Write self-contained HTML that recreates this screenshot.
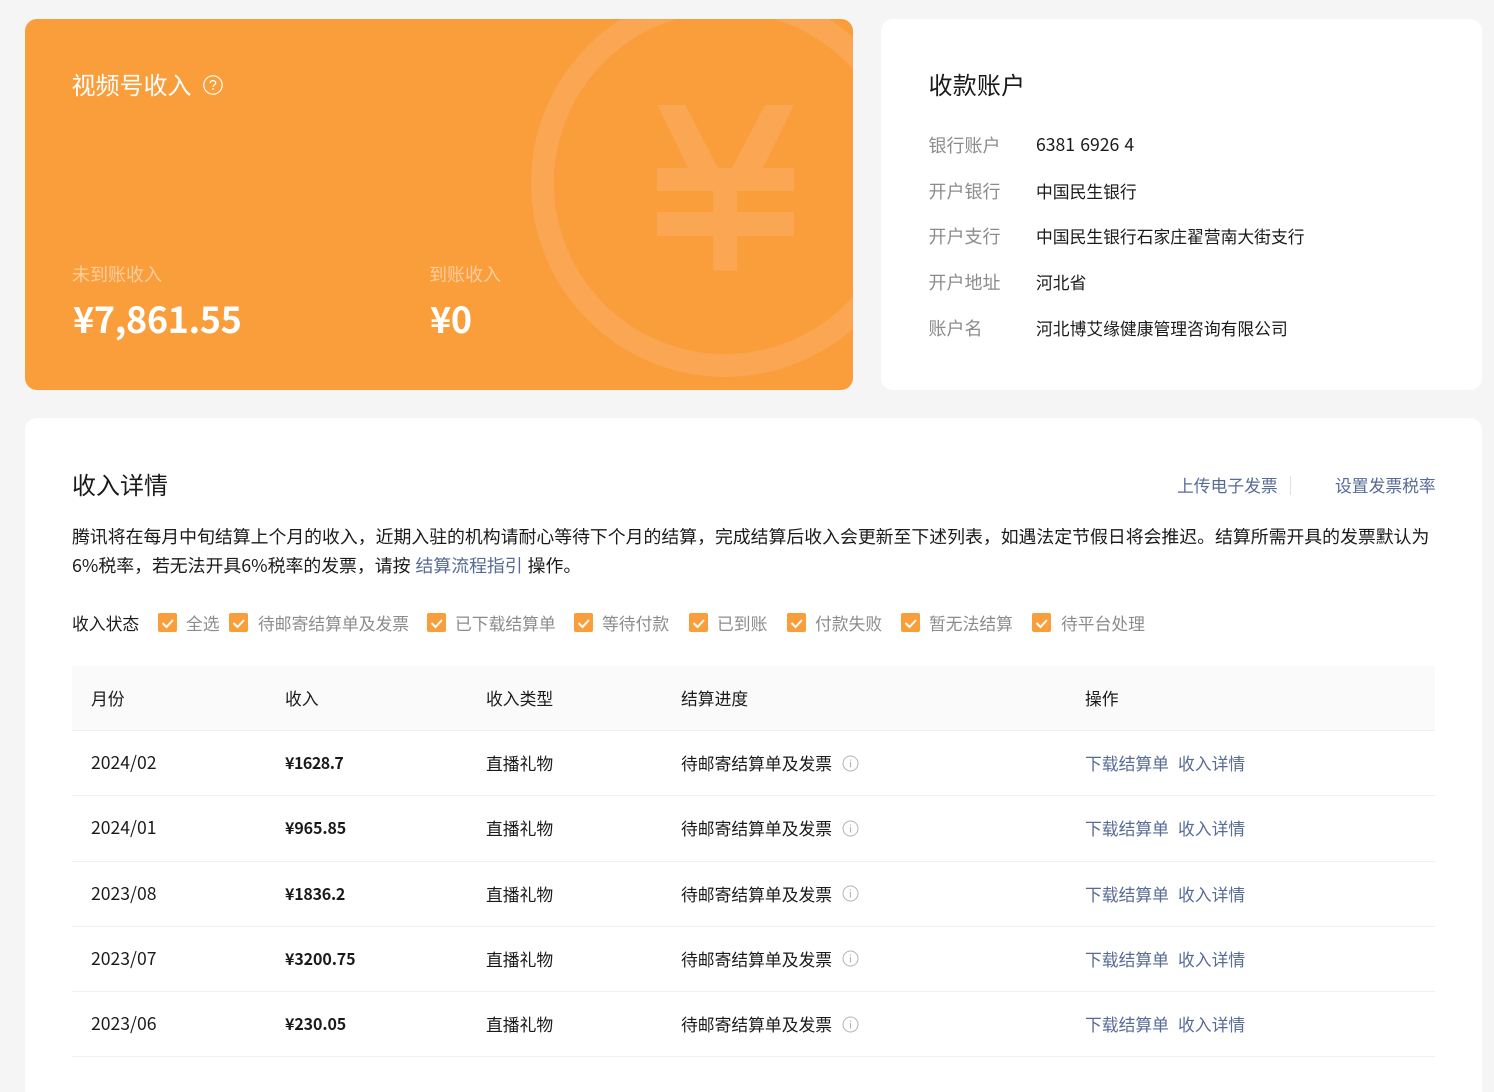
<!DOCTYPE html>
<html lang="zh-CN">
<head>
<meta charset="utf-8">
<title>视频号收入</title>
<style>
*{box-sizing:border-box}
html,body{margin:0;padding:0;width:1494px;height:1092px;overflow:hidden}
body{background:#f5f5f5;position:relative;font-family:"Noto Sans CJK SC","Liberation Sans",sans-serif;color:#1a1a1a}
.t{position:absolute;white-space:nowrap;line-height:24px;font-size:16.8px;font-weight:400}
.card{position:absolute;background:#fff;border-radius:12px}
.g{color:#8c8c8c}
.lbl{font-size:18px;color:#8c8c8c;left:928.500px}
.val{left:1036px}
.d{font-size:17.6px;left:91px}
.a{font-size:16px;font-weight:700;left:285px;letter-spacing:-.1px}
.link{color:#576b95}
.cb{position:absolute;top:613px;width:19px;height:19px;background:#fa9d3b;border-radius:2px}
.cb svg{display:block}
.line{position:absolute;left:72px;width:1363px;height:1px;background:#f0f0f0}
.big{font-size:36px;font-weight:700;line-height:48px;color:#fff;letter-spacing:-.4px}
.inf{position:absolute;left:842px}
</style>
</head>
<body>
<div class="card" style="left:25px;top:19px;width:828px;height:371px;background:#fa9d3b;overflow:hidden">
<svg width="828" height="371" style="position:absolute;left:0;top:0">
<circle cx="700" cy="164" r="182.5" fill="none" stroke="#fba652" stroke-width="23"/>
<path fill="#fba652" d="M632.500 86H660.500L692.700 148.700H707L740 86H769L738 148.700H769V172H712V193H769V217H712V251.500H688.300V217H632V193H688.300V172H632V148.700H663Z"/>
</svg>
</div>
<div class="t" style="left:71.500px;top:68px;font-size:24px;line-height:32px;color:#fff">视频号收入</div>
<svg style="position:absolute;left:203px;top:75px" width="20" height="20" viewBox="0 0 20 20"><circle cx="10" cy="10" r="9.200" fill="none" stroke="#fff" stroke-width="1.200"/><path d="M7.300 8.100C7.300 6.500 8.500 5.600 10 5.600S12.700 6.500 12.700 8C12.700 9.800 10 9.900 10 11.900" fill="none" stroke="#fff" stroke-width="1.300"/><circle cx="10" cy="14" r=".9" fill="#fff"/></svg>
<div class="t" style="left:72px;top:262px;font-size:18px;color:rgba(255,255,255,.5)">未到账收入</div>
<div class="t" style="left:429px;top:262px;font-size:18px;color:rgba(255,255,255,.5)">到账收入</div>
<div class="t big" style="left:73px;top:294px">¥7,861.55</div>
<div class="t big" style="left:430px;top:294px">¥0</div>

<div class="card" style="left:881px;top:19px;width:601px;height:371px"></div>
<div class="t" style="left:928.500px;top:68px;font-size:24px;line-height:32px;letter-spacing:.2px">收款账户</div>
<div class="t lbl" style="top:133px">银行账户</div><div class="t val" style="top:133px;font-size:17.6px;word-spacing:1.200px">6381 6926 4</div>
<div class="t lbl" style="top:179px">开户银行</div><div class="t val" style="top:179px">中国民生银行</div>
<div class="t lbl" style="top:224px">开户支行</div><div class="t val" style="top:224px">中国民生银行石家庄翟营南大街支行</div>
<div class="t lbl" style="top:270px">开户地址</div><div class="t val" style="top:270px">河北省</div>
<div class="t lbl" style="top:316px">账户名</div><div class="t val" style="top:316px">河北博艾缘健康管理咨询有限公司</div>

<div class="card" style="left:25px;top:418px;width:1457px;height:674px;border-radius:12px 12px 0 0"></div>
<div class="t" style="left:72px;top:468px;font-size:24px;line-height:32px">收入详情</div>
<div class="t link" style="left:1177px;top:473px">上传电子发票</div>
<div style="position:absolute;left:1290px;top:476px;width:1px;height:19px;background:#e0e0e0"></div>
<div class="t link" style="left:1335px;top:473px">设置发票税率</div>
<div class="t" style="left:72px;top:524px;font-size:17.880px">腾讯将在每月中旬结算上个月的收入，近期入驻的机构请耐心等待下个月的结算，完成结算后收入会更新至下述列表，如遇法定节假日将会推迟。结算所需开具的发票默认为</div>
<div class="t" style="left:72px;top:553px;font-size:17.880px;word-spacing:1px">6%税率，若无法开具6%税率的发票，请按 <span class="link">结算流程指引</span> 操作。</div>

<div class="t" style="left:72px;top:611px">收入状态</div>
<div class="cb" style="left:158px"><svg width="19" height="19"><path d="M4.500 10L8.500 14L15 7" fill="none" stroke="#fff" stroke-width="2"/></svg></div>
<div class="t g" style="left:186px;top:611px">全选</div>
<div class="cb" style="left:229px"><svg width="19" height="19"><path d="M4.500 10L8.500 14L15 7" fill="none" stroke="#fff" stroke-width="2"/></svg></div>
<div class="t g" style="left:258px;top:611px">待邮寄结算单及发票</div>
<div class="cb" style="left:427px"><svg width="19" height="19"><path d="M4.500 10L8.500 14L15 7" fill="none" stroke="#fff" stroke-width="2"/></svg></div>
<div class="t g" style="left:455px;top:611px">已下载结算单</div>
<div class="cb" style="left:574px"><svg width="19" height="19"><path d="M4.500 10L8.500 14L15 7" fill="none" stroke="#fff" stroke-width="2"/></svg></div>
<div class="t g" style="left:602px;top:611px">等待付款</div>
<div class="cb" style="left:689px"><svg width="19" height="19"><path d="M4.500 10L8.500 14L15 7" fill="none" stroke="#fff" stroke-width="2"/></svg></div>
<div class="t g" style="left:717px;top:611px">已到账</div>
<div class="cb" style="left:787px"><svg width="19" height="19"><path d="M4.500 10L8.500 14L15 7" fill="none" stroke="#fff" stroke-width="2"/></svg></div>
<div class="t g" style="left:815px;top:611px">付款失败</div>
<div class="cb" style="left:901px"><svg width="19" height="19"><path d="M4.500 10L8.500 14L15 7" fill="none" stroke="#fff" stroke-width="2"/></svg></div>
<div class="t g" style="left:929px;top:611px">暂无法结算</div>
<div class="cb" style="left:1032px"><svg width="19" height="19"><path d="M4.500 10L8.500 14L15 7" fill="none" stroke="#fff" stroke-width="2"/></svg></div>
<div class="t g" style="left:1061px;top:611px">待平台处理</div>

<div style="position:absolute;left:72px;top:666px;width:1363px;height:64px;background:#fafafa"></div>
<div class="t" style="left:91px;top:686px">月份</div>
<div class="t" style="left:285px;top:686px">收入</div>
<div class="t" style="left:486px;top:686px">收入类型</div>
<div class="t" style="left:681px;top:686px">结算进度</div>
<div class="t" style="left:1085px;top:686px">操作</div>
<div class="line" style="top:730px"></div>
<div class="line" style="top:795px"></div>
<div class="line" style="top:861px"></div>
<div class="line" style="top:926px"></div>
<div class="line" style="top:991px"></div>
<div class="line" style="top:1056px"></div>

<div class="t d" style="top:751px">2024/02</div>
<div class="t a" style="top:750px;letter-spacing:-.5px">¥1628.7</div>
<div class="t" style="left:486px;top:751px">直播礼物</div>
<div class="t" style="left:681px;top:751px">待邮寄结算单及发票</div>
<svg class="inf" style="top:755px" width="17" height="17" viewBox="0 0 17 17"><circle cx="8.500" cy="8.500" r="7.500" fill="none" stroke="#b2b2b2"/><path d="M8.500 7V12.500M8.500 4.500V5.700" stroke="#b2b2b2" stroke-width="1.100"/></svg>
<div class="t link" style="left:1085px;top:751px">下载结算单</div>
<div class="t link" style="left:1178px;top:751px">收入详情</div>

<div class="t d" style="top:816px">2024/01</div>
<div class="t a" style="top:815px">¥965.85</div>
<div class="t" style="left:486px;top:816px">直播礼物</div>
<div class="t" style="left:681px;top:816px">待邮寄结算单及发票</div>
<svg class="inf" style="top:820px" width="17" height="17" viewBox="0 0 17 17"><circle cx="8.500" cy="8.500" r="7.500" fill="none" stroke="#b2b2b2"/><path d="M8.500 7V12.500M8.500 4.500V5.700" stroke="#b2b2b2" stroke-width="1.100"/></svg>
<div class="t link" style="left:1085px;top:816px">下载结算单</div>
<div class="t link" style="left:1178px;top:816px">收入详情</div>

<div class="t d" style="top:882px">2023/08</div>
<div class="t a" style="top:881px;letter-spacing:-.25px">¥1836.2</div>
<div class="t" style="left:486px;top:882px">直播礼物</div>
<div class="t" style="left:681px;top:882px">待邮寄结算单及发票</div>
<svg class="inf" style="top:885px" width="17" height="17" viewBox="0 0 17 17"><circle cx="8.500" cy="8.500" r="7.500" fill="none" stroke="#b2b2b2"/><path d="M8.500 7V12.500M8.500 4.500V5.700" stroke="#b2b2b2" stroke-width="1.100"/></svg>
<div class="t link" style="left:1085px;top:882px">下载结算单</div>
<div class="t link" style="left:1178px;top:882px">收入详情</div>

<div class="t d" style="top:947px">2023/07</div>
<div class="t a" style="top:946px">¥3200.75</div>
<div class="t" style="left:486px;top:947px">直播礼物</div>
<div class="t" style="left:681px;top:947px">待邮寄结算单及发票</div>
<svg class="inf" style="top:950px" width="17" height="17" viewBox="0 0 17 17"><circle cx="8.500" cy="8.500" r="7.500" fill="none" stroke="#b2b2b2"/><path d="M8.500 7V12.500M8.500 4.500V5.700" stroke="#b2b2b2" stroke-width="1.100"/></svg>
<div class="t link" style="left:1085px;top:947px">下载结算单</div>
<div class="t link" style="left:1178px;top:947px">收入详情</div>

<div class="t d" style="top:1012px">2023/06</div>
<div class="t a" style="top:1011px">¥230.05</div>
<div class="t" style="left:486px;top:1012px">直播礼物</div>
<div class="t" style="left:681px;top:1012px">待邮寄结算单及发票</div>
<svg class="inf" style="top:1016px" width="17" height="17" viewBox="0 0 17 17"><circle cx="8.500" cy="8.500" r="7.500" fill="none" stroke="#b2b2b2"/><path d="M8.500 7V12.500M8.500 4.500V5.700" stroke="#b2b2b2" stroke-width="1.100"/></svg>
<div class="t link" style="left:1085px;top:1012px">下载结算单</div>
<div class="t link" style="left:1178px;top:1012px">收入详情</div>
</body>
</html>
